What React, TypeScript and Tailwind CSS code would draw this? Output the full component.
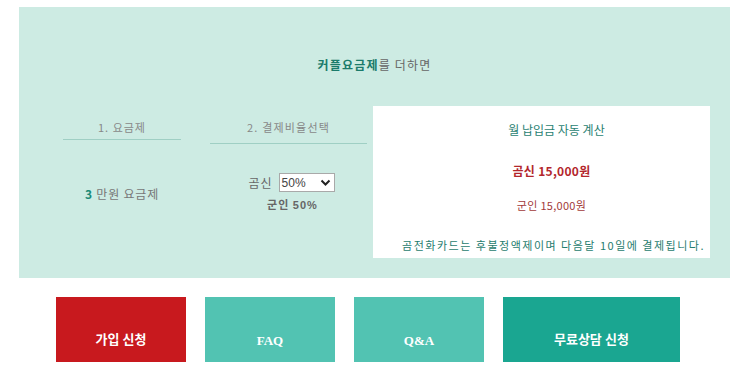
import React from "react";

const ko = { fontFamily: '"Noto Sans CJK KR", "Noto Sans", sans-serif' };
const btn = { fontFamily: '"Liberation Serif", "Noto Sans CJK KR", serif' };

export default function App() {
  return (
    <div className="w-[740px] h-[369px] bg-white overflow-hidden" style={ko}>
      <div className="ml-[19px] mt-[7px] w-[711px] h-[271px] bg-[#cdebe3] flex flex-col">
        <div className="pt-[49px] h-[99px] text-center text-[12px] leading-[18px] tracking-[1.2px]">
          <span className="font-bold text-[#1b7b6b]">커플요금제</span>
          <span className="text-[#666]">를 더하면</span>
        </div>
        <div className="flex">
          <div className="ml-[44px] w-[118px] flex flex-col items-center">
            <div className="mt-[13px] text-[11px] leading-[16px] text-[#888] tracking-[1px]">1. 요금제</div>
            <div className="mt-[4px] w-full h-px bg-[#9fcfc4]" />
            <div className="mt-[46px] text-[12px] leading-[16px] text-[#777] tracking-[0.8px]">
              <span className="font-bold text-[#1b8a78]">3</span> 만원 요금제
            </div>
          </div>
          <div className="ml-[29px] w-[157px] flex flex-col items-center">
            <div className="mt-[13px] text-[11px] leading-[16px] text-[#888] tracking-[1.2px]">2. 결제비율선택</div>
            <div className="mt-[8px] w-full h-px bg-[#9fcfc4]" />
            <div className="mt-[29px] flex items-center gap-[6px] pl-[6px]">
              <span className="text-[12px] text-[#666] tracking-[1px]">곰신</span>
              <div className="relative w-[56px] h-[19px] bg-white border border-[#a9a9a9] flex items-center">
                <span className="pl-[2px] text-[12px] leading-none text-[#444]" style={{ fontFamily: '"Liberation Sans", sans-serif' }}>50%</span>
                <svg className="absolute right-[3px] top-[5px]" width="11" height="8" viewBox="0 0 11 8">
                  <path d="M1.5 1.5 L5.5 5.5 L9.5 1.5" stroke="#222" strokeWidth="2" fill="none" />
                </svg>
              </div>
            </div>
            <div className="mt-[4px] text-[11px] leading-[16px] font-bold text-[#666] pl-[8px] tracking-[1px]">
              군인 <span style={{ fontFamily: '"Liberation Sans", sans-serif' }}>50%</span>
            </div>
          </div>
          <div className="ml-[6px] w-[337px] h-[152px] bg-white flex flex-col items-center pl-[20px]">
            <div className="mt-[16px] pl-[10px] text-[12px] leading-[16px] text-[#2a7f72]">월 납입금 자동 계산</div>
            <div className="mt-[25px] text-[12px] leading-[16px] font-bold text-[#b3262c] tracking-[0.3px]">곰신 15,000원</div>
            <div className="mt-[18px] text-[11px] leading-[16px] text-[#a23a3a] tracking-[0.3px]">군인 15,000원</div>
            <div className="mt-[24px] self-end pr-[5px] text-[11px] leading-[16px] text-[#1f7c6e] tracking-[1.5px] whitespace-nowrap">
              곰전화카드는 후불정액제이며 다음달 10일에 결제됩니다.
            </div>
          </div>
        </div>
      </div>
      <div className="mt-[19px] ml-[56px] flex gap-[19px]" style={btn}>
        <div className="w-[130px] h-[65px] bg-[#c8191e] flex justify-center pt-[33px] text-white font-bold text-[13px]">가입 신청</div>
        <div className="w-[130px] h-[65px] bg-[#52c3b2] flex justify-center pt-[34px] text-white font-bold text-[13px]">FAQ</div>
        <div className="w-[130px] h-[65px] bg-[#52c3b2] flex justify-center pt-[34px] text-white font-bold text-[13px]">Q&amp;A</div>
        <div className="w-[177px] h-[65px] bg-[#1aa691] flex justify-center pt-[33px] text-white font-bold text-[13px]">무료상담 신청</div>
      </div>
    </div>
  );
}
